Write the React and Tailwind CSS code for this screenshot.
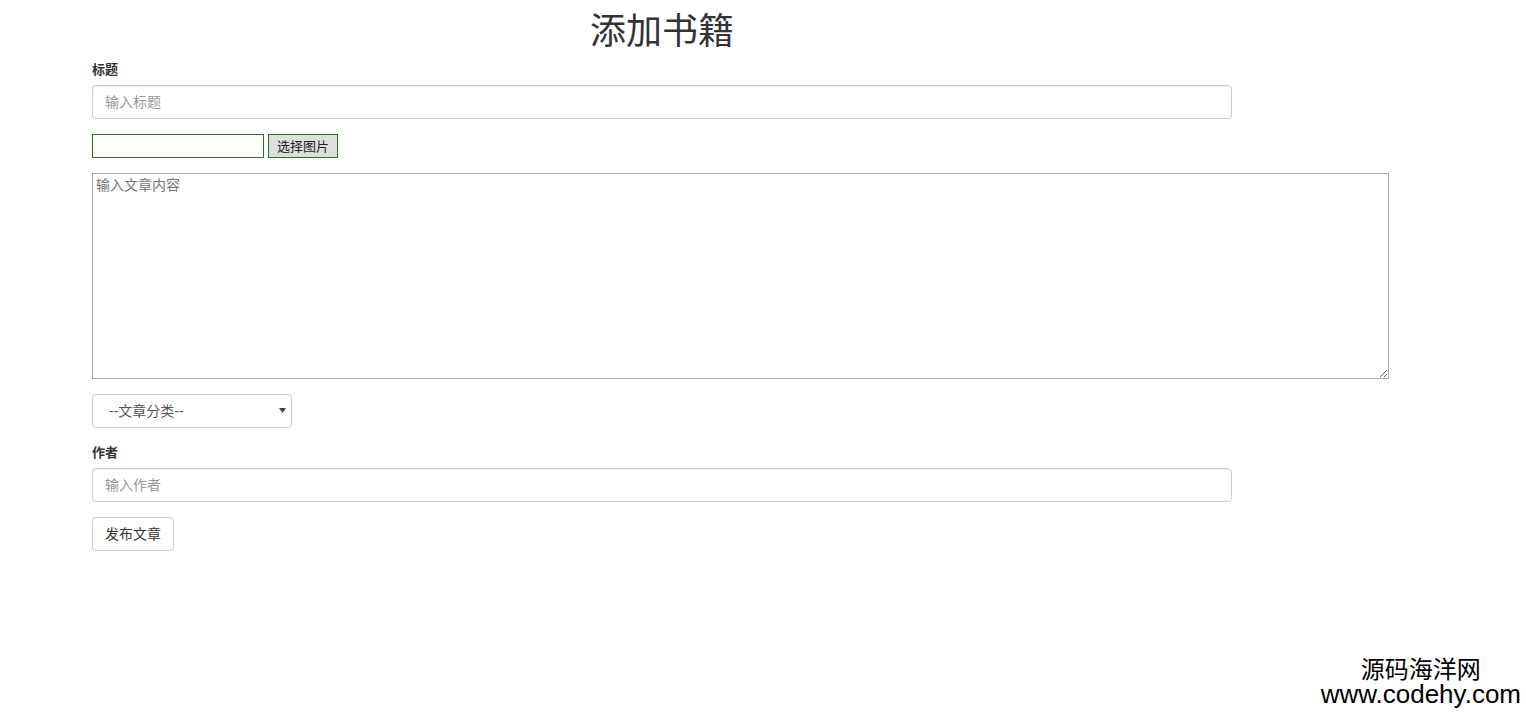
import React from 'react';

const font = { fontFamily: '"Liberation Sans", "Noto Sans CJK SC", sans-serif' };

export default function App() {
  return (
    <div className="relative min-h-[713px] bg-white text-[#333]" style={font}>
      <div className="ml-[92px] w-[1297px] pt-[12px]">
        {/* Heading */}
        <h1 className="w-[1140px] text-center text-[36px] leading-[40px] font-normal text-[#333]">
          添加书籍
        </h1>

        {/* Title */}
        <label className="mt-[8px] mb-[5px] block text-[13px] leading-[20px] font-bold">标题</label>
        <input
          type="text"
          placeholder="输入标题"
          className="block h-[34px] w-[1140px] rounded-[4px] border border-[#ccc] px-[12px] text-[14px] shadow-[inset_0_1px_1px_rgba(0,0,0,0.075)] outline-none placeholder:text-[#999]"
        />

        {/* Image picker */}
        <div className="mt-[15px] flex h-[24px] items-stretch gap-[4px]">
          <div className="w-[172px] border border-[#1f7a1f] bg-white" />
          <button className="w-[70px] border border-[#1f7a1f] bg-[#dedede] text-[13px] leading-none text-[#222]">
            选择图片
          </button>
        </div>

        {/* Content */}
        <textarea
          placeholder="输入文章内容"
          className="mt-[15px] block h-[206px] w-[1297px] resize border border-[#a9a9a9] px-[3px] py-[2px] text-[14px] leading-[18px] outline-none placeholder:text-[#757575]"
        />

        {/* Category */}
        <div className="relative mt-[15px] h-[34px] w-[200px]">
          <select className="h-full w-full appearance-none rounded-[4px] border border-[#ccc] bg-white pl-[16px] text-[14px] text-[#555] outline-none">
            <option>--文章分类--</option>
          </select>
          <svg className="pointer-events-none absolute right-[6px] top-[13px]" width="7" height="7" viewBox="0 0 7 7">
            <path d="M0 1 L7 1 L3.5 6 Z" fill="#444" />
          </svg>
        </div>

        {/* Author */}
        <label className="mt-[15px] mb-[5px] block text-[13px] leading-[20px] font-bold">作者</label>
        <input
          type="text"
          placeholder="输入作者"
          className="block h-[34px] w-[1140px] rounded-[4px] border border-[#ccc] px-[12px] text-[14px] shadow-[inset_0_1px_1px_rgba(0,0,0,0.075)] outline-none placeholder:text-[#999]"
        />

        <button className="mt-[15px] block h-[34px] w-[82px] rounded-[4px] border border-[#ccc] bg-white text-[14px] text-[#333]">
          发布文章
        </button>
      </div>

      {/* Watermark */}
      <div className="absolute right-[5px] bottom-[7px] flex flex-col items-center gap-[1px] text-black">
        <span className="text-[24px] leading-[25px]">源码海洋网</span>
        <span className="text-[26px] leading-[23px]">www.codehy.com</span>
      </div>
    </div>
  );
}
